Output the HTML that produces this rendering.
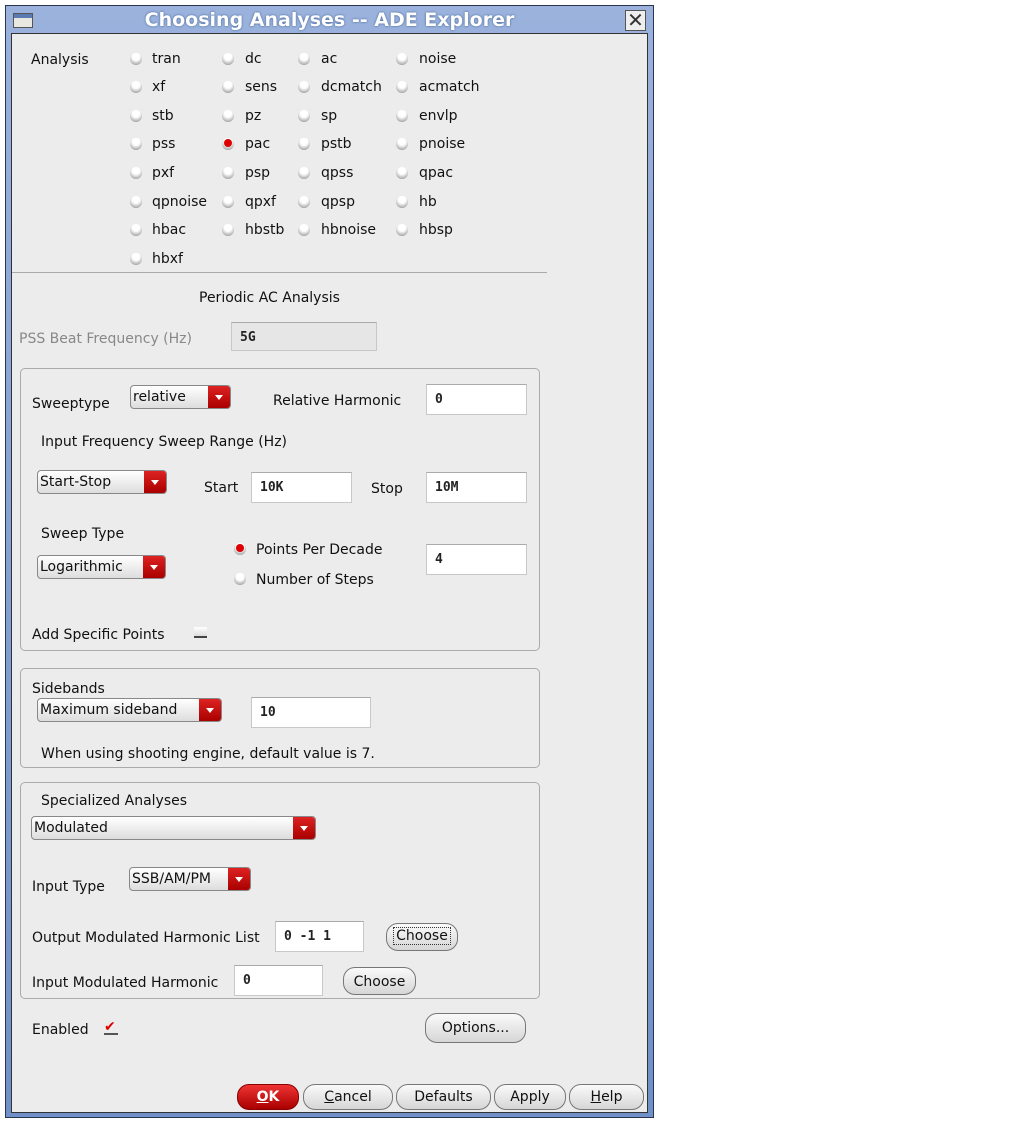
<!DOCTYPE html>
<html><head><meta charset="utf-8">
<style>
*{box-sizing:border-box;margin:0;padding:0}
body{width:1013px;height:1121px;background:#fff;position:relative;overflow:hidden;font-family:"DejaVu Sans","Liberation Sans",sans-serif;font-size:14px;color:#111}
.abs{position:absolute}
.t{position:absolute;line-height:16px;white-space:nowrap}
.win{position:absolute;left:5px;top:5px;width:649px;height:1113px;background:linear-gradient(#9ab2dc,#6f90c8);border:1px solid #2a3550}
.title{position:absolute;left:0;top:0;width:647px;height:28px;color:#fff;font-weight:bold;font-size:19px;text-align:center;line-height:28px;text-shadow:0 0 2px #3a5a90}
.body{position:absolute;left:5px;top:27px;width:637px;height:1080px;background:#ececec;border:1px solid #333}
.r{position:absolute;width:12px;height:12px;border-radius:50%;background:radial-gradient(circle at 50% 30%,#fff 35%,#bbb 70%,#777 100%)}
.r.on::after{content:"";position:absolute;left:2px;top:1px;width:8px;height:8px;border-radius:50%;background:#d00}
.box{position:absolute;border:1px solid #aaa;border-radius:5px}
.in{position:absolute;background:#fff;border:1px solid #c8c8c8;border-top-color:#aaa;font-family:"DejaVu Sans Mono","Liberation Mono",monospace;font-size:13px;font-weight:bold;color:#222;padding-left:8px;line-height:29px}
.cb{position:absolute;height:24px;border:1px solid #888;border-radius:4px;background:linear-gradient(#fff,#ddd);line-height:22px;padding-left:2px;overflow:hidden}
.cb::after{content:"";position:absolute;right:0;top:0;width:22px;height:100%;background:linear-gradient(#d22,#a00)}
.cb::before{content:"";position:absolute;right:7px;top:9px;border-left:4px solid transparent;border-right:4px solid transparent;border-top:5px solid #fff;z-index:2}
.btn{position:absolute;height:26px;border:1px solid #777;border-radius:12px;background:linear-gradient(#fafafa,#d6d6d6);text-align:center;line-height:24px;font-size:14px}
.g{color:#888}
</style></head><body>
<div class="win">
<div class="abs" style="left:7px;top:7px;width:20px;height:15px;background:linear-gradient(#5a7ab0 0 4px,#e8e8e0 4px);border:1px solid #555"></div>
<div class="title">Choosing Analyses -- ADE Explorer</div>
<div class="abs" style="left:619px;top:4px;width:21px;height:21px;background:#eee;border:1px solid #555;font-size:20px;line-height:19px;text-align:center;font-weight:bold;color:#333">✕</div>
<div class="body"></div>
</div>

<div class="t" style="left:31px;top:52px">Analysis</div>
<div class="r" style="left:130px;top:53px"></div><div class="t" style="left:152px;top:51px">tran</div>
<div class="r" style="left:222px;top:53px"></div><div class="t" style="left:245px;top:51px">dc</div>
<div class="r" style="left:298px;top:53px"></div><div class="t" style="left:321px;top:51px">ac</div>
<div class="r" style="left:396px;top:53px"></div><div class="t" style="left:419px;top:51px">noise</div>

<div class="r" style="left:130px;top:81px"></div><div class="t" style="left:152px;top:79px">xf</div>
<div class="r" style="left:222px;top:81px"></div><div class="t" style="left:245px;top:79px">sens</div>
<div class="r" style="left:298px;top:81px"></div><div class="t" style="left:321px;top:79px">dcmatch</div>
<div class="r" style="left:396px;top:81px"></div><div class="t" style="left:419px;top:79px">acmatch</div>

<div class="r" style="left:130px;top:110px"></div><div class="t" style="left:152px;top:108px">stb</div>
<div class="r" style="left:222px;top:110px"></div><div class="t" style="left:245px;top:108px">pz</div>
<div class="r" style="left:298px;top:110px"></div><div class="t" style="left:321px;top:108px">sp</div>
<div class="r" style="left:396px;top:110px"></div><div class="t" style="left:419px;top:108px">envlp</div>

<div class="r" style="left:130px;top:138px"></div><div class="t" style="left:152px;top:136px">pss</div>
<div class="r on" style="left:222px;top:138px"></div><div class="t" style="left:245px;top:136px">pac</div>
<div class="r" style="left:298px;top:138px"></div><div class="t" style="left:321px;top:136px">pstb</div>
<div class="r" style="left:396px;top:138px"></div><div class="t" style="left:419px;top:136px">pnoise</div>

<div class="r" style="left:130px;top:167px"></div><div class="t" style="left:152px;top:165px">pxf</div>
<div class="r" style="left:222px;top:167px"></div><div class="t" style="left:245px;top:165px">psp</div>
<div class="r" style="left:298px;top:167px"></div><div class="t" style="left:321px;top:165px">qpss</div>
<div class="r" style="left:396px;top:167px"></div><div class="t" style="left:419px;top:165px">qpac</div>

<div class="r" style="left:130px;top:196px"></div><div class="t" style="left:152px;top:194px">qpnoise</div>
<div class="r" style="left:222px;top:196px"></div><div class="t" style="left:245px;top:194px">qpxf</div>
<div class="r" style="left:298px;top:196px"></div><div class="t" style="left:321px;top:194px">qpsp</div>
<div class="r" style="left:396px;top:196px"></div><div class="t" style="left:419px;top:194px">hb</div>

<div class="r" style="left:130px;top:224px"></div><div class="t" style="left:152px;top:222px">hbac</div>
<div class="r" style="left:222px;top:224px"></div><div class="t" style="left:245px;top:222px">hbstb</div>
<div class="r" style="left:298px;top:224px"></div><div class="t" style="left:321px;top:222px">hbnoise</div>
<div class="r" style="left:396px;top:224px"></div><div class="t" style="left:419px;top:222px">hbsp</div>

<div class="r" style="left:130px;top:253px"></div><div class="t" style="left:152px;top:251px">hbxf</div>

<div class="abs" style="left:12px;top:272px;width:535px;height:1px;background:#aaa"></div>
<div class="t" style="left:199px;top:290px">Periodic AC Analysis</div>
<div class="t g" style="left:19px;top:331px">PSS Beat Frequency (Hz)</div>
<div class="in" style="left:231px;top:322px;width:146px;height:29px;background:#e6e6e6">5G</div>

<div class="box" style="left:20px;top:368px;width:520px;height:283px"></div>
<div class="t" style="left:32px;top:396px">Sweeptype</div>
<div class="cb" style="left:130px;top:385px;width:101px">relative</div>
<div class="t" style="left:273px;top:393px">Relative Harmonic</div>
<div class="in" style="left:426px;top:384px;width:101px;height:31px">0</div>
<div class="t" style="left:41px;top:434px">Input Frequency Sweep Range (Hz)</div>
<div class="cb" style="left:37px;top:470px;width:130px">Start-Stop</div>
<div class="t" style="left:204px;top:480px">Start</div>
<div class="in" style="left:251px;top:472px;width:101px;height:31px">10K</div>
<div class="t" style="left:371px;top:481px">Stop</div>
<div class="in" style="left:426px;top:472px;width:101px;height:31px">10M</div>
<div class="t" style="left:41px;top:526px">Sweep Type</div>
<div class="cb" style="left:37px;top:555px;width:129px">Logarithmic</div>
<div class="r on" style="left:234px;top:543px"></div><div class="t" style="left:256px;top:542px">Points Per Decade</div>
<div class="r" style="left:234px;top:573px"></div><div class="t" style="left:256px;top:572px">Number of Steps</div>
<div class="in" style="left:426px;top:544px;width:101px;height:31px">4</div>
<div class="t" style="left:32px;top:627px">Add Specific Points</div>
<div class="abs" style="left:194px;top:627px;width:13px;height:11px;background:linear-gradient(#fff,#ddd);border-bottom:2px solid #444"></div>

<div class="box" style="left:20px;top:668px;width:520px;height:100px"></div>
<div class="t" style="left:32px;top:681px">Sidebands</div>
<div class="cb" style="left:37px;top:698px;width:185px">Maximum sideband</div>
<div class="in" style="left:251px;top:697px;width:120px;height:31px">10</div>
<div class="t" style="left:41px;top:746px">When using shooting engine, default value is 7.</div>

<div class="box" style="left:20px;top:782px;width:520px;height:217px"></div>
<div class="t" style="left:41px;top:793px">Specialized Analyses</div>
<div class="cb" style="left:31px;top:816px;width:285px">Modulated</div>
<div class="t" style="left:32px;top:879px">Input Type</div>
<div class="cb" style="left:129px;top:867px;width:122px">SSB/AM/PM</div>
<div class="t" style="left:32px;top:930px">Output Modulated Harmonic List</div>
<div class="in" style="left:275px;top:921px;width:89px;height:31px">0 -1 1</div>
<div class="btn" style="left:386px;top:923px;width:72px;height:28px"><span style="border:1px dotted #333;padding:0 2px">Choose</span></div>
<div class="t" style="left:32px;top:975px">Input Modulated Harmonic</div>
<div class="in" style="left:234px;top:965px;width:89px;height:31px">0</div>
<div class="btn" style="left:343px;top:967px;width:73px;height:28px;line-height:28px">Choose</div>

<div class="t" style="left:32px;top:1022px">Enabled</div>
<div class="abs" style="left:104px;top:1021px;width:14px;height:14px;border-bottom:2px solid #555;color:#d00;font-weight:bold;font-size:14px;line-height:12px">✔</div>
<div class="btn" style="left:425px;top:1013px;width:101px;height:30px;line-height:28px">Options...</div>

<div class="btn" style="left:237px;top:1084px;width:62px;background:linear-gradient(#e33,#a00);color:#fff;font-weight:bold;border-color:#800"><u>O</u>K</div>
<div class="btn" style="left:303px;top:1084px;width:90px"><u>C</u>ancel</div>
<div class="btn" style="left:396px;top:1084px;width:95px">Defaults</div>
<div class="btn" style="left:494px;top:1084px;width:72px">Apply</div>
<div class="btn" style="left:569px;top:1084px;width:75px"><u>H</u>elp</div>
</body></html>
